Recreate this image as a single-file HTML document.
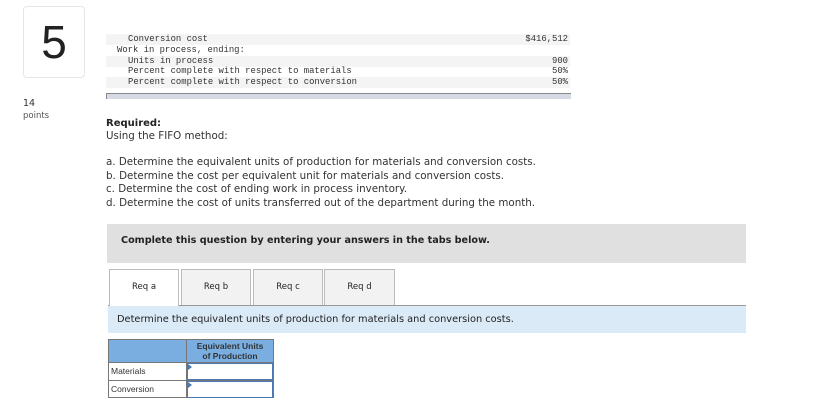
<!DOCTYPE html>
<html><head><style>
body{margin:0;width:840px;height:403px;background:#fff;font-family:"DejaVu Sans",sans-serif;color:#222;position:relative;overflow:hidden}
.abs{position:absolute}
.mono{font-family:"Liberation Mono",monospace;font-size:8.9px;color:#333}
.row{position:absolute;left:106px;width:464px;height:11px;line-height:11px}
.sh{background:#f4f4f4}
.r{position:absolute;right:2px;top:0}
.p{font-size:10.3px;color:#333}
.tab{position:absolute;top:269px;height:36px;background:#f2f2f2;border:1px solid #bbb;border-bottom:none;font-size:8.5px;text-align:center;line-height:34px;box-sizing:border-box}
</style></head><body>
<div class="abs" style="left:23px;top:6px;width:60px;height:70px;border:1px solid #e6e6e6;border-radius:4px;font-size:46px;text-align:center;line-height:70px;color:#222;font-family:'Liberation Sans',sans-serif">5</div>
<div class="abs" style="left:23px;top:98px;font-size:9.5px;color:#333">14</div>
<div class="abs" style="left:23px;top:111px;font-size:8.5px;color:#555">points</div>

<div class="mono">
<div class="row sh" style="top:34px"><span style="margin-left:22px">Conversion cost</span><span class="r">$416,512</span></div>
<div class="row" style="top:45px"><span style="margin-left:11px">Work in process, ending:</span></div>
<div class="row sh" style="top:56px"><span style="margin-left:22px">Units in process</span><span class="r">900</span></div>
<div class="row" style="top:66px"><span style="margin-left:22px">Percent complete with respect to materials</span><span class="r">50%</span></div>
<div class="row sh" style="top:77px"><span style="margin-left:22px">Percent complete with respect to conversion</span><span class="r">50%</span></div>
</div>
<div class="abs" style="left:106px;top:93px;width:464px;height:5px;background:#d6dae4;border-top:1px solid #888;border-left:1px solid #888"></div>

<div class="abs" style="left:106px;top:118px;font-size:10px;font-weight:bold;color:#222">Required:</div>
<div class="abs p" style="left:106px;top:130px">Using the FIFO method:</div>
<div class="abs p" style="left:106px;top:156px;line-height:13.5px">a. Determine the equivalent units of production for materials and conversion costs.<br>b. Determine the cost per equivalent unit for materials and conversion costs.<br>c. Determine the cost of ending work in process inventory.<br>d. Determine the cost of units transferred out of the department during the month.</div>

<div class="abs" style="left:107px;top:224px;width:639px;height:39px;background:#e0e0e0"></div>
<div class="abs" style="left:121px;top:235px;font-size:9.65px;font-weight:bold;color:#222">Complete this question by entering your answers in the tabs below.</div>

<div class="abs" style="left:108px;top:305px;width:638px;height:1px;background:#999"></div>
<div class="tab" style="left:109px;width:70px;background:#fff;height:37px">Req a</div>
<div class="tab" style="left:181px;width:70px">Req b</div>
<div class="tab" style="left:253px;width:70px">Req c</div>
<div class="tab" style="left:324px;width:71px">Req d</div>
<div class="abs" style="left:108px;top:306px;width:638px;height:27px;background:#dbeaf7;font-size:9.8px;line-height:28px;color:#222"><span style="margin-left:9px">Determine the equivalent units of production for materials and conversion costs.</span></div>

<div class="abs" style="left:108px;top:339px;width:166px;height:59px;border:1px solid #777;box-sizing:border-box"></div>
<div class="abs" style="left:109px;top:340px;width:77px;height:22px;background:#7aaee0"></div>
<div class="abs" style="left:186px;top:340px;width:87px;height:22px;background:#7aaee0;border-left:1px solid #777;font-size:8.5px;font-weight:bold;text-align:center;line-height:10px;color:#333;padding-top:1px;box-sizing:border-box;font-family:'Liberation Sans',sans-serif">Equivalent Units<br>of Production</div>
<div class="abs" style="left:109px;top:362px;width:164px;height:1px;background:#777"></div>
<div class="abs" style="left:109px;top:380px;width:164px;height:1px;background:#777"></div>
<div class="abs" style="left:186px;top:362px;width:1px;height:36px;background:#777"></div>
<div class="abs" style="left:187px;top:363px;width:86px;height:17px;border:1px solid #4a78b0;box-sizing:border-box"></div>
<div class="abs" style="left:187px;top:381px;width:86px;height:17px;border:1px solid #4a78b0;box-sizing:border-box"></div>
<div class="abs" style="left:188px;top:364px;width:0;height:0;border-top:3px solid transparent;border-bottom:3px solid transparent;border-left:4px solid #4a78b0"></div>
<div class="abs" style="left:188px;top:382px;width:0;height:0;border-top:3px solid transparent;border-bottom:3px solid transparent;border-left:4px solid #4a78b0"></div>
<div class="abs" style="left:111px;top:366px;font-size:8.5px;color:#333;font-family:'Liberation Sans',sans-serif">Materials</div>
<div class="abs" style="left:111px;top:384px;font-size:8.5px;color:#333;font-family:'Liberation Sans',sans-serif">Conversion</div>
</body></html>
